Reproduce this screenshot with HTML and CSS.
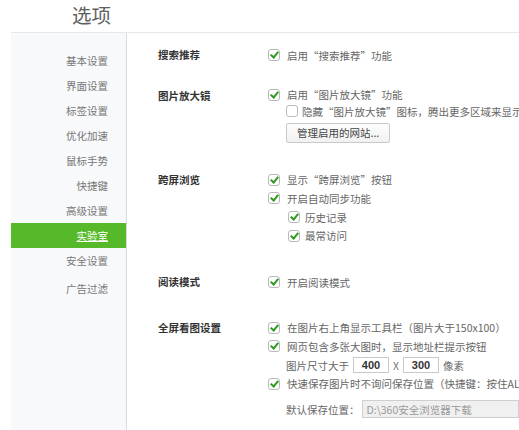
FILE: index.html
```html
<!DOCTYPE html>
<html lang="zh-CN">
<head>
<meta charset="utf-8">
<title>选项</title>
<link rel="stylesheet" href="styles.css">
</head>
<body>
<div class="page">
  <header class="header"><h1 class="title">选项</h1></header>
  <div class="main">
    <nav class="sidebar">
      <a class="nav-item">基本设置</a>
      <a class="nav-item">界面设置</a>
      <a class="nav-item">标签设置</a>
      <a class="nav-item">优化加速</a>
      <a class="nav-item">鼠标手势</a>
      <a class="nav-item">快捷键</a>
      <a class="nav-item">高级设置</a>
      <a class="nav-item active">实验室</a>
      <a class="nav-item">安全设置</a>
      <a class="nav-item last">广告过滤</a>
    </nav>
    <section class="content">
      <div class="group g1">
        <div class="label">搜索推荐</div>
        <div class="opts">
          <div class="row"><span class="cb on"></span>启用“搜索推荐”功能</div>
        </div>
      </div>
      <div class="group g2">
        <div class="label">图片放大镜</div>
        <div class="opts tight">
          <div class="row"><span class="cb on"></span>启用“图片放大镜”功能</div>
          <div class="row sub"><span class="cb"></span>隐藏“图片放大镜”图标，腾出更多区域来显示图片</div>
          <button class="btn">管理启用的网站...</button>
        </div>
      </div>
      <div class="group g3">
        <div class="label">跨屏浏览</div>
        <div class="opts">
          <div class="row"><span class="cb on"></span>显示“跨屏浏览”按钮</div>
          <div class="row"><span class="cb on"></span>开启自动同步功能</div>
          <div class="row sub2"><span class="cb on"></span>历史记录</div>
          <div class="row sub2"><span class="cb on"></span>最常访问</div>
        </div>
      </div>
      <div class="group g4">
        <div class="label">阅读模式</div>
        <div class="opts">
          <div class="row"><span class="cb on"></span>开启阅读模式</div>
        </div>
      </div>
      <div class="group g5">
        <div class="label">全屏看图设置</div>
        <div class="opts">
          <div class="row"><span class="cb on"></span>在图片右上角显示工具栏（图片大于150x100）</div>
          <div class="row"><span class="cb on"></span>网页包含多张大图时，显示地址栏提示按钮</div>
          <div class="row plain">图片尺寸大于<input class="num" value="400"><span class="x">X</span><input class="num" value="300">像素</div>
          <div class="row"><span class="cb on"></span>快速保存图片时不询问保存位置（快捷键：按住ALT键点击图片）</div>
          <div class="row plain path-row">默认保存位置：<input class="path" value="D:\360安全浏览器下载" disabled></div>
        </div>
      </div>
    </section>
  </div>
</div>
</body>
</html>
```

FILE: styles.css
```css
* { box-sizing: border-box; }
html, body { margin: 0; padding: 0; background: #fff; }
body {
  width: 519px;
  height: 430px;
  overflow: hidden;
  font-family: "Noto Sans CJK SC", "Liberation Sans", sans-serif;
  font-size: 10.5px;
  color: #666;
}
.page { display: flex; flex-direction: column; height: 430px; }
.header {
  height: 33px;
  margin-left: 11px;
  border-bottom: 1px solid #e6e8ea;
}
.title {
  margin: 0;
  padding: 2px 0 0 61px;
  font-size: 19.5px;
  font-weight: 400;
  line-height: 26px;
  color: #606060;
}
.main { display: flex; flex: 1; padding-left: 11px; }
.sidebar {
  width: 116px;
  background: #f7f9fb;
  border-right: 1px solid #d9dcdf;
  padding-top: 15px;
  display: flex;
  flex-direction: column;
}
.nav-item {
  display: block;
  height: 25px;
  line-height: 25px;
  text-align: right;
  padding-right: 18px;
  color: #777;
}
.nav-item.last { margin-top: 3px; }
.nav-item.active {
  background: #56b92a;
  color: #fff;
  text-decoration: underline;
}
.content { flex: 1; padding: 13px 0 0 31px; min-width: 0; }
.group { display: flex; }
.label {
  width: 110px;
  flex: none;
  font-weight: 700;
  color: #333;
  line-height: 18px;
}
.opts { flex: 1; min-width: 0; }
.row {
  display: flex;
  align-items: center;
  height: 18.6px;
  white-space: nowrap;
  color: #666;
}
.opts.tight .row { height: 16.5px; }
.cb {
  flex: none;
  width: 12px;
  height: 12px;
  border: 1px solid #b9b9b9;
  border-radius: 3px;
  background: #fff;
  margin-right: 7px;
  position: relative;
}
.cb.on::after {
  content: "";
  position: absolute;
  left: 3px;
  top: 0px;
  width: 3px;
  height: 6px;
  border: solid #2e9a1e;
  border-width: 0 2px 2px 0;
  transform: rotate(40deg);
}
.row.sub { padding-left: 18px; }
.row.sub .cb { margin-right: 4px; }
.row.sub2 { padding-left: 20px; }
.row.sub2 .cb { margin-right: 5px; }
.row.plain { padding-left: 18px; }
.btn {
  display: block;
  margin: 3px 0 0 18px;
  height: 20px;
  padding: 0 10px;
  white-space: nowrap;
  font-family: inherit;
  font-size: 10.5px;
  color: #444;
  background: linear-gradient(#fdfdfd, #f1f1f1);
  border: 1px solid #c9c9c9;
  border-radius: 2px;
}
.num {
  width: 36px;
  height: 16px;
  margin: 0 4px;
  padding: 0;
  border: 1px solid #c8c8c8;
  text-align: center;
  font-family: "Liberation Sans", sans-serif;
  font-weight: 700;
  font-size: 11px;
  color: #333;
}
.x { color: #777; }
.path-row { margin-top: 7px; height: 19px; }
.path {
  width: 200px;
  height: 18px;
  margin-left: 2px;
  padding: 0 4px;
  border: 1px solid #cfcfcf;
  background: #f0f0f0;
  font-family: "Noto Sans CJK SC", sans-serif;
  font-size: 10.5px;
  color: #999;
}
.g1 { margin-top: 0; }
.g2 { margin-top: 22px; }
.g3 { margin-top: 28px; }
.g4 { margin-top: 28px; }
.g5 { margin-top: 27px; }
```
